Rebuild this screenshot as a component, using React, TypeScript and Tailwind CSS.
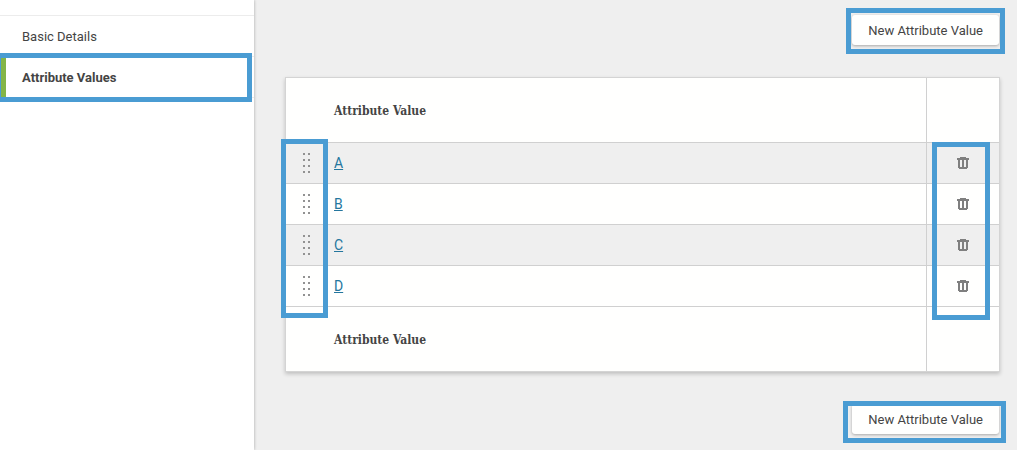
import React from "react";

const values = ["A", "B", "C", "D"];

function Highlight({ className }: { className: string }) {
  return (
    <div
      aria-hidden="true"
      className={`pointer-events-none absolute z-10 border-5 border-[#4a9cd3] ${className}`}
    />
  );
}

function GripIcon() {
  return (
    <svg width="7" height="20" viewBox="0 0 7 20" fill="#929292" shapeRendering="crispEdges" aria-hidden="true">
      {[0, 6, 12, 18].map((y) => (
        <g key={y}>
          <rect x="0" y={y} width="2" height="2" />
          <rect x="5" y={y} width="2" height="2" />
        </g>
      ))}
    </svg>
  );
}

function TrashIcon() {
  return (
    <svg width="12" height="12" viewBox="0 0 12 12" fill="#7f7f7f" shapeRendering="crispEdges" aria-hidden="true">
      <path
        fillRule="evenodd"
        d="M3 0h6v1h3v2h-1v8h-1v1H2v-1H1V3H0V1h3zM3 3v7h2V3zM7 3v7h2V3z"
      />
    </svg>
  );
}

function NewValueButton({ highlight }: { highlight: string }) {
  return (
    <div className="relative mr-px flex">
      <button
        type="button"
        className="h-[30px] rounded-[3px] bg-[#fffffe] px-4 pt-0.5 text-[13px] text-[#444] shadow-[0_1px_3px_rgba(0,0,0,0.3)]"
      >
        New Attribute Value
      </button>
      <Highlight className={highlight} />
    </div>
  );
}

function LabelRow({ height }: { height: string }) {
  return (
    <tr className={`bg-[#fffffe] ${height}`}>
      <td />
      <th
        scope="col"
        className="pt-0.5 pl-2 text-left font-['Roboto_Slab','DejaVu_Serif_Condensed','DejaVu_Serif',serif] text-[12px] font-bold"
      >
        Attribute Value
      </th>
      <td className="border-l border-[#d0d0d0]" />
    </tr>
  );
}

export default function App() {
  return (
    <div className="flex min-h-screen bg-[#efefef] font-[Roboto,sans-serif] text-[13px] text-[#444]">
      <nav className="z-0 w-[254px] shrink-0 bg-white pt-[15px] shadow-[0_0_3px_rgba(0,0,0,0.3)]">
        <a href="#basic" className="flex h-[41px] items-center border-t border-[#ececec] pt-0.5 pl-[22px]">
          Basic Details
        </a>
        <div className="relative">
          <a
            href="#values"
            aria-current="page"
            className="flex h-[42px] items-center border-y border-[#ececec] border-l-6 border-l-[#84b547] pt-0.5 pl-4 font-bold"
          >
            Attribute Values
          </a>
          <Highlight className="-top-[3px] right-[2px] -bottom-1 -left-1" />
        </div>
      </nav>

      <main className="flex min-w-0 flex-1 flex-col items-end pt-[15px] pr-[17px] pb-4 pl-[31px]">
        <NewValueButton highlight="-top-[7px] -right-[6px] -bottom-[9px] -left-[6px]" />

        <div className="relative mt-8 mb-8 w-full border border-[#d4d4d4] shadow-[0_2px_4px_rgba(0,0,0,0.2)]">
          <table className="w-full table-fixed border-collapse">
            <colgroup>
              <col className="w-10" />
              <col />
              <col className="w-[73px]" />
            </colgroup>
            <thead>
              <LabelRow height="h-16" />
            </thead>
            <tbody>
              {values.map((value) => (
                <tr key={value} className="h-[41px] border-y border-[#d0d0d0] bg-[#fffffe] odd:bg-[#efefef]">
                  <td className="p-0">
                    <button type="button" aria-label={`Reorder ${value}`} className="flex w-full cursor-move justify-center pl-px">
                      <GripIcon />
                    </button>
                  </td>
                  <td className="pt-0.5 pb-0 pl-2">
                    <a href={`#${value}`} className="text-[14px] text-[#24769e] underline underline-offset-1">
                      {value}
                    </a>
                  </td>
                  <td className="border-l border-[#d0d0d0] p-0">
                    <button type="button" aria-label={`Delete ${value}`} className="flex w-full justify-center">
                      <TrashIcon />
                    </button>
                  </td>
                </tr>
              ))}
            </tbody>
            <tfoot>
              <LabelRow height="h-[65px]" />
            </tfoot>
          </table>
          <Highlight className="top-[61px] bottom-[53px] -left-[5px] w-[47px]" />
          <Highlight className="top-16 right-[9px] bottom-[51px] w-[58px]" />
        </div>

        <NewValueButton highlight="-top-[3px] -right-[7px] -bottom-[9px] -left-[9px]" />
      </main>
    </div>
  );
}
